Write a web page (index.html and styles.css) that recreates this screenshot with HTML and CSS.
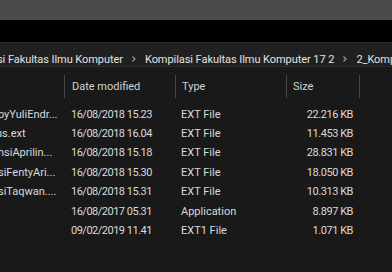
FILE: index.html
```html
<!DOCTYPE html>
<html lang="en">
<head>
  <meta charset="UTF-8" />
  <meta name="viewport" content="width=device-width, initial-scale=1.0" />
  <title>Explorer - Kompilasi Fakultas Ilmu Komputer</title>
  <link rel="stylesheet" href="styles.css">
</head>
<body>
  <div class="window">
    <div class="titlebar"></div>
    <div class="ribbon"></div>

    <nav class="address">
      <span class="crumb first">si Fakultas Ilmu Komputer</span>
      <svg class="chev" width="22" height="10" viewBox="0 0 22 10"><polyline points="9.5,2.5 12,5 9.5,7.5" /></svg>
      <span class="crumb">Kompilasi Fakultas Ilmu Komputer 17 2</span>
      <svg class="chev" width="22" height="10" viewBox="0 0 22 10"><polyline points="9.5,2.5 12,5 9.5,7.5" /></svg>
      <span class="crumb">2_Kompilasi Skripsi</span>
    </nav>

    <div class="list">
      <div class="head">
        <div class="col name"></div>
        <div class="col date">Date modified</div>
        <div class="col type">Type</div>
        <div class="col size">Size</div>
      </div>

      <div class="rows">
        <div class="row">
          <div class="col name"><span>pyYuliEndr...</span></div>
          <div class="col date">16/08/2018 15.23</div>
          <div class="col type">EXT File</div>
          <div class="col size">22.216 KB</div>
        </div>
        <div class="row">
          <div class="col name"><span class="short">us.ext</span></div>
          <div class="col date">16/08/2018 16.04</div>
          <div class="col type">EXT File</div>
          <div class="col size">11.453 KB</div>
        </div>
        <div class="row">
          <div class="col name"><span>hsiAprilin...</span></div>
          <div class="col date">16/08/2018 15.18</div>
          <div class="col type">EXT File</div>
          <div class="col size">28.831 KB</div>
        </div>
        <div class="row">
          <div class="col name"><span>siFentyAri...</span></div>
          <div class="col date">16/08/2018 15.30</div>
          <div class="col type">EXT File</div>
          <div class="col size">18.050 KB</div>
        </div>
        <div class="row">
          <div class="col name"><span>siTaqwan....</span></div>
          <div class="col date">16/08/2018 15.31</div>
          <div class="col type">EXT File</div>
          <div class="col size">10.313 KB</div>
        </div>
        <div class="row">
          <div class="col name"></div>
          <div class="col date">16/08/2017 05.31</div>
          <div class="col type">Application</div>
          <div class="col size">8.897 KB</div>
        </div>
        <div class="row">
          <div class="col name"></div>
          <div class="col date">09/02/2019 11.41</div>
          <div class="col type">EXT1 File</div>
          <div class="col size">1.071 KB</div>
        </div>
      </div>
    </div>
  </div>
</body>
</html>
```

FILE: styles.css
```css
body {
  margin: 0;
  font-family: Roboto, 'Open Sans', sans-serif;
  font-size: 11px;
  background: #191919;
  color: #dadada;
  overflow: hidden;
}
.window {
  width: 392px;
  height: 272px;
  display: flex;
  flex-direction: column;
  overflow: hidden;
}
.titlebar {
  height: 20px;
  background: #4b4b4b;
}
.ribbon {
  height: 22px;
  background: #000;
}
.address {
  height: 25px;
  box-sizing: border-box;
  padding-top: 9px;
  display: flex;
  align-items: center;
  white-space: nowrap;
  background: #202020;
  border-top: 1px solid #2c2c2c;
  border-bottom: 1px solid #2c2c2c;
  color: #e2e2e2;
  letter-spacing: -0.06px;
}
.crumb.first {
  margin-left: -3px;
}
.chev {
  flex: none;
}
.chev polyline {
  fill: none;
  stroke: #9c9c9c;
  stroke-width: 1.1;
}

/* file list */
.list {
  flex: 1;
}
.head {
  display: flex;
  margin-top: 8px;
  height: 23px;
  color: #d2d2d2;
}
.head .col {
  display: flex;
  align-items: center;
  box-sizing: border-box;
}
.head .date,
.head .type,
.head .size {
  border-left: 1px solid #474747;
}
.head .size {
  border-right: 1px solid #474747;
}
.col.name { width: 64px; }
.col.date { width: 111px; padding-left: 7px; }
.col.type { width: 111px; padding-left: 6px; }
.col.size { width: 74px; padding-left: 6px; }

.rows {
  padding-top: 6.5px;
}
.row {
  display: flex;
  height: 19.4px;
  align-items: center;
  white-space: nowrap;
}
.row .col {
  box-sizing: border-box;
}
.row .name {
  overflow: hidden;
}
.row .name span {
  display: block;
  margin-left: -2px;
}
.row .name .short {
  margin-left: -4px;
}
.row .date {
  letter-spacing: -0.5px;
}
.row .size {
  text-align: right;
  padding-right: 7px;
  letter-spacing: -0.45px;
}
```
